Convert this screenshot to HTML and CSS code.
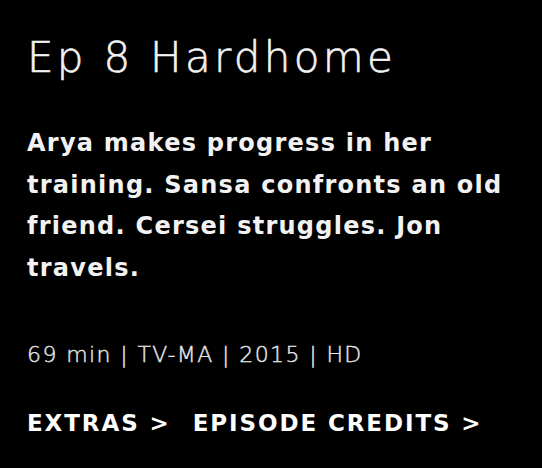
FILE: index.html
```html
<!DOCTYPE html>
<html>
<head>
<meta charset="utf-8">
<link rel="stylesheet" href="styles.css">
</head>
<body>
<main class="episode">
  <h1 class="title">Ep 8 Hardhome</h1>
  <p class="synopsis">Arya makes progress in her training. Sansa confronts an old friend. Cersei struggles. Jon travels.</p>
  <p class="meta">69 min | TV-MA | 2015 | HD</p>
  <nav class="links">
    <a class="link" href="#">EXTRAS &gt;</a>
    <a class="link" href="#">EPISODE CREDITS &gt;</a>
  </nav>
</main>
</body>
</html>
```

FILE: styles.css
```css
html, body {
  margin: 0;
  padding: 0;
  background: #000;
  width: 542px;
  height: 468px;
  overflow: hidden;
}
.episode {
  padding: 27px 0 0 27px;
  color: #f2f2f2;
  font-family: "DejaVu Sans", "Open Sans", sans-serif;
}
.title {
  margin: 0;
  font-size: 42px;
  font-weight: 200;
  line-height: 62px;
  letter-spacing: 3.3px;
  -webkit-text-stroke: 0.6px #f2f2f2;
}
.synopsis {
  margin: 34px 0 0;
  width: 500px;
  font-size: 24px;
  font-weight: 700;
  line-height: 41.5px;
  letter-spacing: 1.25px;
}
.meta {
  margin: 53px 0 0;
  font-size: 22px;
  font-weight: 200;
  letter-spacing: 1.4px;
  color: #e8e8e8;
  -webkit-text-stroke: 0.4px #e8e8e8;
}
.links {
  display: flex;
  gap: 22px;
  margin-top: 43px;
}
.link {
  color: #fff;
  text-decoration: none;
  font-size: 23px;
  font-weight: 700;
  letter-spacing: 1.9px;
}
```
